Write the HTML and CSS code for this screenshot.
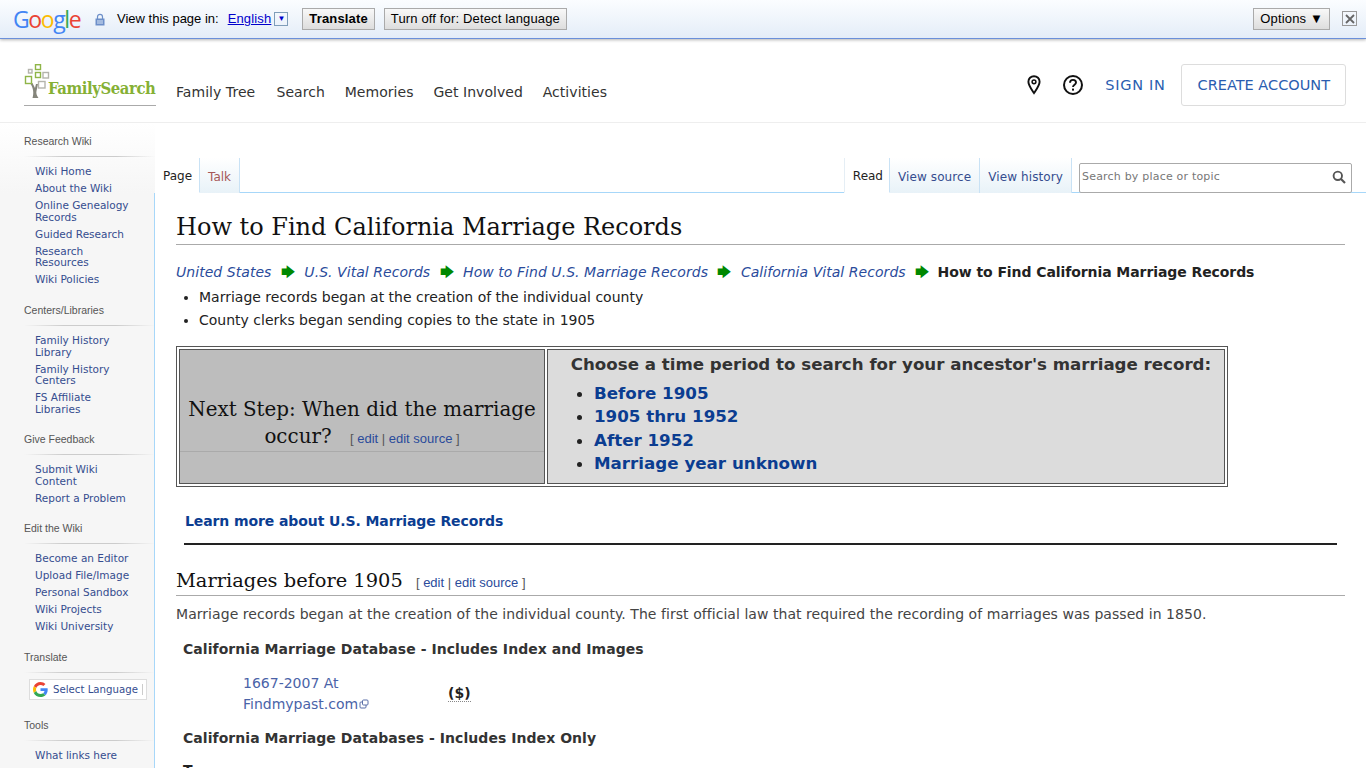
FILE: index.html
```html
<!DOCTYPE html>
<html lang="en">
<head>
  <meta charset="UTF-8">
  <meta name="viewport" content="width=device-width, initial-scale=1.0">
  <title>How to Find California Marriage Records</title>
  <link rel="stylesheet" href="styles.css">
</head>
<body>
  <!-- Translate bar -->
  <div class="translate-bar">
    <span class="google-logo"><b class="g-blue">G</b><b class="g-red">o</b><b class="g-yellow">o</b><b class="g-blue">g</b><b class="g-green">l</b><b class="g-red">e</b></span>
    <svg class="lock-icon" width="10" height="13" viewBox="0 0 10 13">
      <path d="M2.5 6V3.8a2.5 2.5 0 0 1 5 0V6" fill="none" stroke="#6d8fc9" stroke-width="1.2"/>
      <rect x="0.5" y="5.5" width="9" height="7" fill="#6d8fc9"/>
      <path d="M2 8h6M2 10h6" stroke="#dbe6f5" stroke-width="1"/>
    </svg>
    <span class="view-label">View this page in:</span>
    <a class="lang-link" href="#">English</a>
    <span class="lang-arrow">&#9660;</span>
    <button class="bar-button translate-button">Translate</button>
    <button class="bar-button turn-off-button">Turn off for: Detect language</button>
    <span class="bar-spacer"></span>
    <button class="bar-button options-button">Options &#9660;</button>
    <span class="close-box">
      <svg width="10" height="10" viewBox="0 0 10 10"><path d="M1 1l8 8M9 1l-8 8" stroke="#666" stroke-width="1.8"/></svg>
    </span>
  </div>

  <!-- Site header -->
  <header class="site-header">
    <a class="logo" href="#">
      <svg class="logo-tree" width="26" height="36" viewBox="0 0 26 36">
        <g fill="#fff" stroke-width="1.4">
          <rect x="11.500" y="0.700" width="5" height="4.800" stroke="#8fb548"/>
          <rect x="4.500" y="5.500" width="3.500" height="3.500" stroke="#b4b4ac"/>
          <rect x="11.500" y="8.500" width="5" height="5" stroke="#8fb548"/>
          <rect x="19" y="8.500" width="5.500" height="5.500" stroke="#b4b4ac"/>
          <path d="M8.500 34c1.500-5 1-10-2.500-15h2.500l2.500 5 1-4h2l-1.500 7c-.5 2 0 4 2 7z" fill="#85857b" stroke="none"/>
          <rect x="1.500" y="12.500" width="6" height="7" stroke="#8fb548"/>
          <rect x="14.500" y="17.500" width="6.500" height="6.500" stroke="#b4b4ac"/>
        </g>
      </svg>
      <span class="logo-text">FamilySearch</span>
    </a>
    <nav class="main-nav">
      <a href="#">Family Tree</a>
      <a href="#">Search</a>
      <a href="#">Memories</a>
      <a href="#">Get Involved</a>
      <a href="#">Activities</a>
    </nav>
    <div class="header-right">
      <svg class="pin-icon" width="14" height="20" viewBox="0 0 14 20">
        <path d="M7 1.2c-3.2 0-5.600 2.400-5.600 5.500 0 3.600 3.400 8 5.600 11.400 2.200-3.400 5.600-7.800 5.600-11.400 0-3.100-2.400-5.500-5.600-5.500z" fill="none" stroke="#111" stroke-width="1.900"/>
        <circle cx="7" cy="6.800" r="1.900" fill="none" stroke="#111" stroke-width="1.500"/>
      </svg>
      <svg class="help-icon" width="20" height="20" viewBox="0 0 20 20">
        <circle cx="10" cy="10" r="9" fill="none" stroke="#111" stroke-width="2"/>
        <path d="M7 7.800c0-1.800 1.300-2.900 3-2.900s3 1.100 3 2.600c0 2.300-3 2.200-3 4.600" fill="none" stroke="#111" stroke-width="1.900"/>
        <rect x="9" y="13.600" width="2" height="2" fill="#111"/>
      </svg>
      <a class="sign-in" href="#">SIGN IN</a>
      <a class="create-account" href="#">CREATE ACCOUNT</a>
    </div>
  </header>

  <div class="page-wrap">
    <!-- Left sidebar -->
    <aside class="sidebar">
      <h3>Research Wiki</h3>
      <ul>
        <li><a href="#">Wiki Home</a></li>
        <li><a href="#">About the Wiki</a></li>
        <li><a href="#">Online Genealogy Records</a></li>
        <li><a href="#">Guided Research</a></li>
        <li><a href="#">Research Resources</a></li>
        <li><a href="#">Wiki Policies</a></li>
      </ul>
      <h3>Centers/Libraries</h3>
      <ul>
        <li><a href="#">Family History Library</a></li>
        <li><a href="#">Family History Centers</a></li>
        <li><a href="#">FS Affiliate Libraries</a></li>
      </ul>
      <h3>Give Feedback</h3>
      <ul>
        <li><a href="#">Submit Wiki Content</a></li>
        <li><a href="#">Report a Problem</a></li>
      </ul>
      <h3>Edit the Wiki</h3>
      <ul>
        <li><a href="#">Become an Editor</a></li>
        <li><a href="#">Upload File/Image</a></li>
        <li><a href="#">Personal Sandbox</a></li>
        <li><a href="#">Wiki Projects</a></li>
        <li><a href="#">Wiki University</a></li>
      </ul>
      <h3>Translate</h3>
      <div class="select-language">
        <svg width="15" height="15" viewBox="0 0 48 48">
          <path fill="#ea4335" d="M24 9.500c3.500 0 6.700 1.300 9.100 3.500l6.800-6.800C35.800 2.400 30.300 0 24 0 14.600 0 6.500 5.400 2.600 13.200l7.900 6.100C12.400 13.700 17.700 9.500 24 9.500z"/>
          <path fill="#4285f4" d="M47 24.500c0-1.600-.1-3.100-.4-4.500H24v9h12.900c-.6 3-2.200 5.500-4.700 7.200l7.600 5.900C44.300 37.900 47 31.800 47 24.500z"/>
          <path fill="#fbbc05" d="M10.500 28.700c-.5-1.500-.8-3-.8-4.700s.3-3.200.8-4.700l-7.900-6.100C.9 16.500 0 20.100 0 24s.9 7.500 2.600 10.800l7.900-6.100z"/>
          <path fill="#34a853" d="M24 48c6.500 0 11.900-2.100 15.800-5.800l-7.600-5.900c-2.100 1.400-4.900 2.300-8.200 2.300-6.300 0-11.600-4.200-13.500-9.900l-7.900 6.100C6.500 42.600 14.600 48 24 48z"/>
        </svg>
        <span>Select Language</span>
      </div>
      <h3>Tools</h3>
      <ul>
        <li><a href="#">What links here</a></li>
        <li><a href="#">Related changes</a></li>
      </ul>
    </aside>

    <main class="main-area">
      <div class="tab-row">
        <a class="tab tab-active tab-first" href="#">Page</a>
        <a class="tab tab-new" href="#">Talk</a>
        <span class="tab-spacer"></span>
        <a class="tab tab-active tab-read" href="#">Read</a>
        <a class="tab tab-view" href="#">View source</a>
        <a class="tab tab-view" href="#">View history</a>
        <div class="search-box">
          <span>Search by place or topic</span>
          <svg width="14" height="14" viewBox="0 0 14 14">
            <circle cx="5.800" cy="5.800" r="4.200" fill="none" stroke="#555" stroke-width="1.900"/>
            <path d="M9 9l4 4" stroke="#555" stroke-width="2.200"/>
          </svg>
        </div>
      </div>

      <div class="content">
        <h1>How to Find California Marriage Records</h1>
        <div class="crumbs">
          <a href="#">United States</a>
          <span class="arrow">&#129094;</span>
          <a href="#">U.S. Vital Records</a>
          <span class="arrow">&#129094;</span>
          <a href="#">How to Find U.S. Marriage Records</a>
          <span class="arrow">&#129094;</span>
          <a href="#">California Vital Records</a>
          <span class="arrow">&#129094;</span>
          <b>How to Find California Marriage Records</b>
        </div>
        <ul class="intro-list">
          <li>Marriage records began at the creation of the individual county</li>
          <li>County clerks began sending copies to the state in 1905</li>
        </ul>

        <table class="step-table">
          <tr>
            <td class="step-left">
              <div class="step-heading">Next Step: When did the marriage occur? <span class="edit-links">[ <a href="#">edit</a> | <a href="#">edit source</a> ]</span></div>
            </td>
            <td class="step-right">
              <div class="step-title">Choose a time period to search for your ancestor's marriage record:</div>
              <ul>
                <li><a href="#">Before 1905</a></li>
                <li><a href="#">1905 thru 1952</a></li>
                <li><a href="#">After 1952</a></li>
                <li><a href="#">Marriage year unknown</a></li>
              </ul>
            </td>
          </tr>
        </table>

        <p class="learn-more"><a href="#">Learn more about U.S. Marriage Records</a></p>
        <hr class="dark-rule">

        <h2>Marriages before 1905 <span class="edit-links">[ <a href="#">edit</a> | <a href="#">edit source</a> ]</span></h2>
        <p class="law-text">Marriage records began at the creation of the individual county. The first official law that required the recording of marriages was passed in 1850.</p>
        <p class="db-title">California Marriage Database - Includes Index and Images</p>
        <div class="db-row">
          <a class="db-link" href="#">1667-2007 At Findmypast.com<svg class="ext-icon" width="10" height="10" viewBox="0 0 10 10"><rect x="1" y="3" width="6" height="6" rx="1" fill="none" stroke="#5a6fa8"/><rect x="3.500" y="1" width="5.500" height="5" rx="1" fill="#fff" stroke="#5a6fa8"/></svg></a>
          <span class="dollar">($)</span>
        </div>
        <p class="db-title db-title-second">California Marriage Databases - Includes Index Only</p>
        <p class="cut-line">T</p>
      </div>
    </main>
  </div>
</body>
</html>
```

FILE: styles.css
```css
html, body {
  height: 768px;
  overflow: hidden;
}

body {
  margin: 0;
  background: #fff;
  color: #222;
  font-family: "DejaVu Sans", sans-serif;
  font-size: 14px;
}

a {
  text-decoration: none;
  color: #0b3d91;
}

/* Translate bar */
.translate-bar {
  display: flex;
  align-items: center;
  height: 37px;
  padding: 0 9px 1px 14px;
  background: linear-gradient(#fbfdff, #e4edf8);
  border-bottom: 1px solid #6b90da;
  box-shadow: 0 1px 3px rgba(0, 0, 0, 0.3);
  font-family: "Liberation Sans", Arial, sans-serif;
  font-size: 13px;
  color: #000;
}

.google-logo {
  font-family: "Open Sans", sans-serif;
  font-size: 23px;
  letter-spacing: -1.4px;
  width: 68px;
  margin-left: -1px;
}

.google-logo b {
  font-weight: 500;
}

.g-blue { color: #4285f4; }
.g-red { color: #ea4335; }
.g-yellow { color: #fbbc05; }
.g-green { color: #34a853; }

.lock-icon {
  margin: 2px 0 0 14px;
}

.view-label {
  margin-left: 12px;
}

.lang-link {
  margin-left: 9px;
  color: #00c;
  text-decoration: underline;
  letter-spacing: 0.15px;
}

.lang-arrow {
  width: 12px;
  height: 12px;
  margin-left: 3px;
  border: 1px solid #7f9db9;
  font-size: 8px;
  line-height: 12px;
  text-align: center;
  color: #00c;
}

.bar-button {
  height: 22px;
  padding: 0 6px;
  background: linear-gradient(#f8f8f8, #ddd);
  border: 1px solid #aaa;
  font-family: "Liberation Sans", Arial, sans-serif;
  font-size: 13px;
  letter-spacing: 0.15px;
  color: #000;
}

.translate-button {
  margin-left: 14px;
  font-weight: bold;
}

.turn-off-button {
  margin-left: 9px;
}

.bar-spacer {
  flex: 1;
}

.close-box {
  display: flex;
  align-items: center;
  justify-content: center;
  width: 13px;
  height: 13px;
  margin-left: 12px;
  border: 1px solid #999;
}

/* Site header */
.site-header {
  display: flex;
  align-items: flex-start;
  height: 83px;
  padding-left: 24px;
  padding-right: 20px;
  border-bottom: 1px solid #eee;
}

.logo {
  display: flex;
  width: 132px;
  height: 41px;
  margin-top: 25px;
  border-bottom: 1px solid #aaa;
}

.logo-tree {
  flex: none;
}

.logo-text {
  margin: 15px 0 0 -2px;
  font-family: "DejaVu Serif Condensed", "DejaVu Serif", serif;
  font-stretch: condensed;
  font-size: 16.5px;
  font-weight: bold;
  letter-spacing: -0.4px;
  color: #85b034;
}

.main-nav {
  display: flex;
  gap: 19.8px;
  margin: 45px 0 0 20px;
}

.main-nav a {
  color: #333;
  font-size: 14px;
  letter-spacing: 0.05px;
}

.main-nav a:first-child {
  margin-right: 1.5px;
}

.header-right {
  display: flex;
  align-items: center;
  margin-left: auto;
  margin-top: 25px;
}

.help-icon {
  margin-left: 22px;
}

.sign-in {
  margin-left: 22px;
  color: #2a5db0;
  font-size: 14.5px;
  letter-spacing: 0.7px;
}

.create-account {
  margin-left: 15px;
  padding: 12px 15px 12px 16px;
  border: 1px solid #ddd;
  border-radius: 3px;
  color: #2a5db0;
  font-size: 14.5px;
}

/* Page layout */
.page-wrap {
  display: flex;
  align-items: stretch;
}

.sidebar {
  flex: none;
  width: 131px;
  height: 645px;
  padding: 12px 0 0 24px;
  background: linear-gradient(#fff, #f6f6f6 70px);
  font-size: 10.5px;
}

.sidebar h3 {
  margin: 0 0 9px;
  padding-bottom: 10px;
  font-family: "Liberation Sans", Arial, sans-serif;
  font-size: 10.5px;
  font-weight: normal;
  color: #555;
  background: linear-gradient(to right, transparent, #ccc 30%, #ccc 70%, transparent) no-repeat 0 100% / 100% 1px;
}

.sidebar ul {
  margin: 0 0 12.4px;
  padding: 0 20px 0 11px;
  list-style: none;
}

.sidebar li {
  padding: 0 0 5.3px;
  line-height: 11.7px;
}

.sidebar a {
  color: #354d8f;
}

.select-language {
  display: flex;
  align-items: center;
  gap: 5px;
  width: 113px;
  height: 19px;
  margin: -3px 0 19px 5px;
  padding-left: 3px;
  background: #fff;
  border: 1px solid #ddd;
  font-size: 10.2px;
  color: #354d8f;
}

.select-language span {
  padding-right: 4px;
  border-right: 1px solid #ccc;
}

/* Tabs */
.main-area {
  flex: 1;
  min-width: 0;
}

.tab-row {
  display: flex;
  align-items: stretch;
  height: 34px;
  margin-top: 35px;
  padding-right: 14px;
  border-bottom: 1px solid #a7d7f9;
  font-size: 12px;
}

.tab {
  display: flex;
  align-items: center;
  padding: 2px 8px 0;
  margin-bottom: -1px;
  background: linear-gradient(#fff, #e8f2f8);
  border-right: 1px solid #c9e2f5;
  color: #354d8f;
}

.tab-active {
  background: #fff;
  border-bottom: 1px solid #fff;
  color: #222;
}

.tab-first {
  padding-right: 7px;
}

.tab-read {
  padding-right: 6px;
  border-left: 1px solid #e5eef5;
}

.tab-view {
  letter-spacing: 0.1px;
}

.tab-new {
  color: #a55858;
}

.tab-spacer {
  flex: 1;
}

.search-box {
  display: flex;
  align-items: center;
  justify-content: space-between;
  box-sizing: border-box;
  width: 273px;
  height: 30px;
  margin: 0 0 -1px 7px;
  align-self: flex-end;
  padding: 0 5px 3px 2px;
  background: #fff;
  border: 1px solid #aaa;
  border-radius: 2px;
  font-size: 11px;
  letter-spacing: 0.2px;
  color: #777;
}

/* Article */
.content {
  height: 576px;
  padding: 0 21px 0 21px;
  border-left: 1px solid #a7d7f9;
  margin-left: -1px;
  overflow: hidden;
}

h1 {
  margin: 20px 0 0;
  padding-bottom: 3px;
  border-bottom: 1px solid #aaa;
  font-family: "DejaVu Serif", serif;
  font-size: 24px;
  font-weight: normal;
  color: #111;
}

.crumbs {
  margin-top: 17px;
  font-size: 14px;
  white-space: nowrap;
}

.crumbs a {
  color: #2a4b9b;
  font-style: italic;
  letter-spacing: 0.05px;
}

.crumbs b {
  letter-spacing: -0.08px;
  margin-left: -1px;
}

.crumbs .arrow {
  margin: 0 5px;
  color: #080;
}

.intro-list {
  margin: 0;
  padding-left: 23px;
}

.intro-list li {
  line-height: 23px;
}

.step-table {
  margin-top: 14px;
  width: 1052px;
  border: 1px solid #555;
  border-spacing: 2px;
}

.step-left,
.step-right {
  border: 1px solid #555;
  padding: 0;
}

.step-left {
  width: 364px;
  background: #bdbdbd;
  text-align: center;
  vertical-align: top;
}

.step-heading {
  height: 55px;
  margin-top: 46px;
  border-bottom: 1px solid #aaa;
  font-family: "DejaVu Serif", serif;
  font-size: 19.9px;
  line-height: 27px;
  color: #111;
}

.edit-links {
  margin-left: 12px;
  font-family: "Liberation Sans", Arial, sans-serif;
  font-size: 13px;
  color: #555;
}

.edit-links a {
  color: #2a4b9b;
}

h2 .edit-links {
  margin-left: 7px;
}

.step-right {
  background: #dcdcdc;
  vertical-align: top;
}

.step-title {
  padding: 3px 0 0 10px;
  text-align: center;
  font-size: 16.65px;
  font-weight: bold;
  line-height: 23px;
  color: #333;
}

.step-right ul {
  margin: 6px 0 7px;
  padding-left: 46px;
}

.step-right li {
  font-size: 16.7px;
  font-weight: bold;
  line-height: 23.4px;
}

.learn-more {
  margin: 24px 0 0 9px;
  font-weight: bold;
  line-height: 20px;
  letter-spacing: -0.1px;
}

.dark-rule {
  height: 2px;
  margin: 12px 8px 0 8px;
  background: #222;
  border: 0;
}

h2 {
  margin: 24px 0 0;
  padding-bottom: 3px;
  border-bottom: 1px solid #aaa;
  font-family: "DejaVu Serif", serif;
  font-size: 19.4px;
  font-weight: normal;
  color: #111;
}

.law-text {
  margin: 8px 0 0;
  color: #444;
  line-height: 20px;
  letter-spacing: 0.05px;
}

.db-title {
  margin: 15px 0 0 7px;
  font-weight: bold;
  line-height: 20px;
  letter-spacing: 0.05px;
  color: #333;
}

.db-row {
  display: flex;
  align-items: center;
  margin: 14px 0 0 67px;
}

.db-link {
  width: 180px;
  line-height: 21px;
  color: #4a63a8;
}

.ext-icon {
  margin-left: 1px;
}

.dollar {
  margin-left: 25px;
  border-bottom: 1px dotted #888;
  font-weight: bold;
}

.db-title-second {
  margin-top: 13px;
}

.cut-line {
  margin: 14px 0 0 7px;
  font-weight: bold;
}
```
